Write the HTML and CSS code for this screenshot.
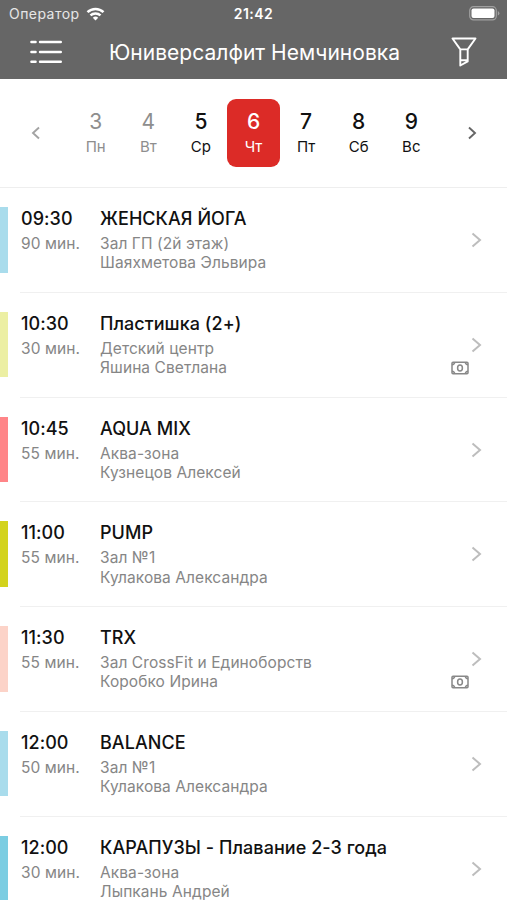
FILE: index.html
```html
<!DOCTYPE html>
<html lang="ru">
<head>
    <meta charset="UTF-8">
    <meta name="viewport" content="width=device-width, initial-scale=1.0">
    <title>Расписание</title>
    <link rel="stylesheet" href="styles.css">
</head>
<body>
    <header class="header">
        <div class="status-bar">
            <div class="operator">
                <span>Оператор</span>
                <svg class="wifi" width="19" height="14" viewBox="0 0 18 14" fill="none" stroke="#fff" stroke-width="2.5">
                    <path d="M1 5.2a11.4 11.4 0 0 1 16 0M4 8.4a7.2 7.2 0 0 1 10 0"/>
                    <path d="M6.3 10.7a3.9 3.9 0 0 1 5.4 0L9 13.6z" fill="#fff" stroke="none"/>
                </svg>
            </div>
            <div class="clock">21:42</div>
            <svg class="battery" width="31" height="15" viewBox="0 0 31 15">
                <rect x="0.7" y="0.7" width="26.6" height="13.2" rx="3.8" fill="none" stroke="#a0a0a0" stroke-width="1.2"/>
                <rect x="2.5" y="2.5" width="23" height="9.6" rx="2" fill="#fff"/>
                <path d="M28.8 5v4.6q1.6-.7 1.6-2.3t-1.6-2.3z" fill="#a0a0a0"/>
            </svg>
        </div>
        <div class="nav-bar">
            <svg class="menu-icon" width="32" height="24" viewBox="0 0 32 24" stroke="#fff" stroke-width="2.4" stroke-linecap="round">
                <path d="M1.4 2h4.2M10 2h20.8M1.4 12h4.2M10 12h20.8M1.4 21.7h4.2M10 21.7h20.8"/>
            </svg>
            <h1>Юниверсалфит Немчиновка</h1>
            <svg class="filter-icon" width="26" height="30" viewBox="0 0 26 30" fill="none" stroke="#fff" stroke-width="1.9" stroke-linejoin="round">
                <path d="M1.5 1.5h23L16.7 12.4v12L9.3 28.5V12.4zM9.3 12.4h7.4M9.3 23.3h7.4"/>
            </svg>
        </div>
    </header>

    <!-- Дни недели -->
    <div class="calendar">
        <svg class="arrow" width="10" height="14" viewBox="0 0 10 14" fill="none" stroke="#a3a3a3" stroke-width="1.9">
            <path d="M9 1.5L3 7l6 5.5"/>
        </svg>
        <div class="days">
            <div class="day past"><b>3</b><span>Пн</span></div>
            <div class="day past"><b>4</b><span>Вт</span></div>
            <div class="day"><b>5</b><span>Ср</span></div>
            <div class="day active"><b>6</b><span>Чт</span></div>
            <div class="day"><b>7</b><span>Пт</span></div>
            <div class="day"><b>8</b><span>Сб</span></div>
            <div class="day"><b>9</b><span>Вс</span></div>
        </div>
        <svg class="arrow" width="10" height="14" viewBox="0 0 10 14" fill="none" stroke="#666" stroke-width="1.9">
            <path d="M2 1.5L8 7l-6 5.5"/>
        </svg>
    </div>

    <!-- Список занятий -->
    <div class="schedule">
        <div class="lesson">
            <div class="mark blue"></div>
            <div class="lesson-body">
                <div class="time"><h2>09:30</h2><p>90 мин.</p></div>
                <div class="info"><h2>ЖЕНСКАЯ ЙОГА</h2><p>Зал ГП (2й этаж)</p><p>Шаяхметова Эльвира</p></div>
                <div class="side">
                    <svg class="chevron" width="11" height="16" viewBox="0 0 11 16"><path d="M1.5 1.5L9 8l-7.5 6.5"/></svg>
                </div>
            </div>
        </div>
        <div class="lesson">
            <div class="mark yellow"></div>
            <div class="lesson-body">
                <div class="time"><h2>10:30</h2><p>30 мин.</p></div>
                <div class="info"><h2>Пластишка (2+)</h2><p>Детский центр</p><p>Яшина Светлана</p></div>
                <div class="side">
                    <svg class="chevron" width="11" height="16" viewBox="0 0 11 16"><path d="M1.5 1.5L9 8l-7.5 6.5"/></svg>
                    <svg class="money" width="18" height="14" viewBox="0 0 18 14">
                        <rect x="1" y="1.2" width="16" height="11.6" rx="1"/>
                        <ellipse cx="9" cy="7" rx="2.4" ry="3"/>
                        <path d="M1 3.8Q3.4 3.6 3.8 1.2M14.2 1.2Q14.6 3.6 17 3.8M17 10.2Q14.6 10.4 14.2 12.8M3.8 12.8Q3.4 10.4 1 10.2"/>
                    </svg>
                </div>
            </div>
        </div>
        <div class="lesson">
            <div class="mark pink"></div>
            <div class="lesson-body">
                <div class="time"><h2>10:45</h2><p>55 мин.</p></div>
                <div class="info"><h2>AQUA MIX</h2><p>Аква-зона</p><p>Кузнецов Алексей</p></div>
                <div class="side">
                    <svg class="chevron" width="11" height="16" viewBox="0 0 11 16"><path d="M1.5 1.5L9 8l-7.5 6.5"/></svg>
                </div>
            </div>
        </div>
        <div class="lesson">
            <div class="mark olive"></div>
            <div class="lesson-body">
                <div class="time"><h2>11:00</h2><p>55 мин.</p></div>
                <div class="info"><h2>PUMP</h2><p>Зал №1</p><p>Кулакова Александра</p></div>
                <div class="side">
                    <svg class="chevron" width="11" height="16" viewBox="0 0 11 16"><path d="M1.5 1.5L9 8l-7.5 6.5"/></svg>
                </div>
            </div>
        </div>
        <div class="lesson">
            <div class="mark peach"></div>
            <div class="lesson-body">
                <div class="time"><h2>11:30</h2><p>55 мин.</p></div>
                <div class="info"><h2>TRX</h2><p>Зал CrossFit и Единоборств</p><p>Коробко Ирина</p></div>
                <div class="side">
                    <svg class="chevron" width="11" height="16" viewBox="0 0 11 16"><path d="M1.5 1.5L9 8l-7.5 6.5"/></svg>
                    <svg class="money" width="18" height="14" viewBox="0 0 18 14">
                        <rect x="1" y="1.2" width="16" height="11.6" rx="1"/>
                        <ellipse cx="9" cy="7" rx="2.4" ry="3"/>
                        <path d="M1 3.8Q3.4 3.6 3.8 1.2M14.2 1.2Q14.6 3.6 17 3.8M17 10.2Q14.6 10.4 14.2 12.8M3.8 12.8Q3.4 10.4 1 10.2"/>
                    </svg>
                </div>
            </div>
        </div>
        <div class="lesson">
            <div class="mark blue"></div>
            <div class="lesson-body">
                <div class="time"><h2>12:00</h2><p>50 мин.</p></div>
                <div class="info"><h2>BALANCE</h2><p>Зал №1</p><p>Кулакова Александра</p></div>
                <div class="side">
                    <svg class="chevron" width="11" height="16" viewBox="0 0 11 16"><path d="M1.5 1.5L9 8l-7.5 6.5"/></svg>
                </div>
            </div>
        </div>
        <div class="lesson">
            <div class="mark sky"></div>
            <div class="lesson-body">
                <div class="time"><h2>12:00</h2><p>30 мин.</p></div>
                <div class="info"><h2>КАРАПУЗЫ - Плавание 2-3 года</h2><p>Аква-зона</p><p>Лыпкань Андрей</p></div>
                <div class="side">
                    <svg class="chevron" width="11" height="16" viewBox="0 0 11 16"><path d="M1.5 1.5L9 8l-7.5 6.5"/></svg>
                </div>
            </div>
        </div>
    </div>
</body>
</html>
```
FILE: styles.css
```css
* {
    box-sizing: border-box;
}
body {
    margin: 0;
    height: 900px;
    overflow: hidden;
    background-color: #fff;
    color: #111;
    font-family: 'Inter', sans-serif;
}
h1, h2, p {
    margin: 0;
}
.header {
    height: 79px;
    background-color: #666;
    color: #fff;
}
.status-bar {
    display: grid;
    grid-template-columns: 1fr auto 1fr;
    align-items: center;
    height: 27px;
    padding: 0 7px 0 9px;
    font-size: 14px;
}
.operator {
    display: flex;
    align-items: center;
    gap: 6px;
    color: #e6e6e6;
    letter-spacing: 0.45px;
}
.clock {
    margin-right: 2px;
    font-weight: 600;
    letter-spacing: 0.5px;
}
.battery {
    justify-self: end;
}
.nav-bar {
    display: flex;
    align-items: center;
    justify-content: space-between;
    height: 50px;
    padding: 0 30px;
}
.nav-bar h1 {
    margin-right: 4px;
    font-size: 21px;
    font-weight: 400;
    letter-spacing: 0.03px;
}
.calendar {
    display: flex;
    align-items: center;
    justify-content: space-between;
    height: 109px;
    padding: 0 30px;
    border-bottom: 1px solid #eee;
}
.days {
    display: flex;
}
.day {
    display: flex;
    flex-direction: column;
    align-items: center;
    width: 52.6px;
    height: 68px;
    margin-top: -1px;
    padding-top: 10px;
    border-radius: 9px;
    font-size: 15px;
    line-height: 24px;
}
.day b {
    font-size: 21px;
    font-weight: 500;
    line-height: 26px;
}
.past {
    color: #8e8e8e;
}
.past b {
    font-weight: 400;
}
.active {
    background-color: #dc2b27;
    color: #fff;
}
.lesson {
    display: flex;
    gap: 12px;
    height: 104.8px;
}
.mark {
    flex: none;
    width: 8px;
    height: 65.5px;
    margin-top: 19px;
}
.blue { background-color: #a9dcec; }
.yellow { background-color: #ecefa3; }
.pink { background-color: #ff8588; }
.olive { background-color: #d3d31d; }
.peach { background-color: #fcd3c8; }
.sky { background-color: #7bcde2; }
.lesson-body {
    display: flex;
    flex: 1;
    padding: 20px 0 0 1px;
    border-bottom: 1px solid #f0f0f0;
}
.time {
    width: 79px;
}
.info {
    flex: 1;
}
.lesson h2 {
    margin-bottom: 4px;
    font-size: 18px;
    font-weight: 500;
    line-height: 22px;
    letter-spacing: 0.05px;
}
.lesson p {
    color: #868686;
    font-size: 15.5px;
    line-height: 19.3px;
    letter-spacing: 0.08px;
}
.side {
    display: flex;
    flex-direction: column;
    align-items: flex-end;
    width: 60px;
    padding: 24px 25px 0 0;
}
.chevron {
    fill: none;
    stroke: #bdbdbd;
    stroke-width: 2;
}
.money {
    margin: 8px 13px 0 0;
    fill: none;
    stroke: #888;
    stroke-width: 1.5;
}
```
